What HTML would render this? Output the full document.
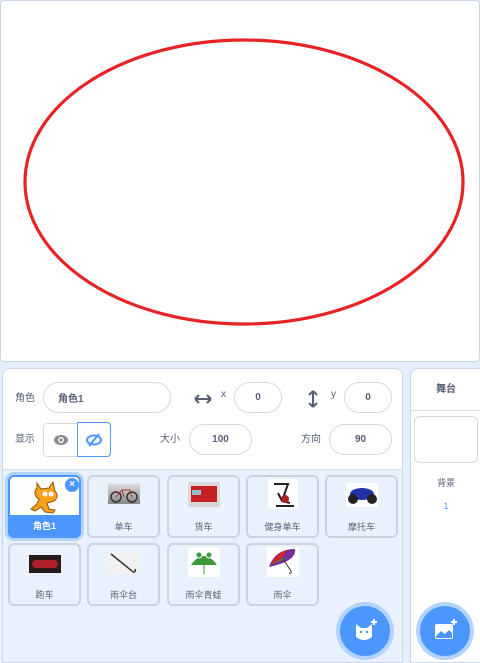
<!DOCTYPE html>
<html><head><meta charset="utf-8"><style>
*{box-sizing:border-box;margin:0;padding:0}
body{width:480px;height:657px;overflow:hidden;background:#e5f0ff;font-family:"Liberation Sans","Noto Sans CJK SC",sans-serif;color:#575e75;position:relative}
.stage{position:absolute;left:0;top:0;width:480px;height:362px;background:#fff;border:1px solid #c9d6e8;border-radius:4px}
.panel{position:absolute;left:2px;top:368px;width:401px;height:295px;background:#e9f1fc;border:1px solid #c9d6e8;border-radius:8px 8px 0 0;overflow:hidden}
.info{position:absolute;left:0;top:0;width:100%;height:101px;background:#fff;border-bottom:1px solid #d9e0ea}
.lbl{position:absolute;font-size:10px;color:#575e75}
.inp{position:absolute;height:31px;border:1px solid #d9d9d9;border-radius:16px;font-size:10px;font-weight:bold;color:#575e75;display:flex;align-items:center;justify-content:center}
.stagep{position:absolute;left:410px;top:368px;width:72px;height:295px;background:#fff;border:1px solid #c9d6e8;border-radius:8px 0 0 0}
.tile{position:absolute;width:73px;height:63px;background:#e9f1fc;border:2px solid #cdd3dc;border-radius:6px}
.tile .nm{position:absolute;left:0;right:0;top:43px;text-align:center;font-size:9px;color:#575e75}
.th{position:absolute;left:50%;transform:translateX(-50%)}
.btn{position:absolute;width:50px;height:50px;border-radius:50%;background:#4c97ff;box-shadow:0 0 0 4px #b3d4ff;display:flex;align-items:center;justify-content:center}
</style></head><body>
<div class="stage"><svg width="480" height="362" style="position:absolute;left:-1px;top:-1px"><ellipse cx="244" cy="182" rx="219" ry="142" fill="none" stroke="#e62325" stroke-width="3.2"/></svg></div>

<div class="panel">
 <div class="info">
  <div class="lbl" style="left:12px;top:20px">角色</div>
  <div class="inp" style="left:40px;top:13px;width:128px;justify-content:flex-start;padding-left:14px">角色1</div>
  <svg style="position:absolute;left:191px;top:25px" width="18" height="10" viewBox="0 0 18 10"><path d="M1 5H17M1 5L5 1M1 5L5 9M17 5L13 1M17 5L13 9" stroke="#575e75" stroke-width="2" fill="none"/></svg>
  <div class="lbl" style="left:218px;top:20px">x</div>
  <div class="inp" style="left:231px;top:13px;width:48px">0</div>
  <svg style="position:absolute;left:305px;top:21px" width="10" height="18" viewBox="0 0 10 18"><path d="M5 1V17M5 1L1 5M5 1L9 5M5 17L1 13M5 17L9 13" stroke="#575e75" stroke-width="2" fill="none"/></svg>
  <div class="lbl" style="left:328px;top:20px">y</div>
  <div class="inp" style="left:341px;top:13px;width:48px">0</div>
  <div class="lbl" style="left:12px;top:61px">显示</div>
  <div style="position:absolute;left:40px;top:54px;width:35px;height:34px;border:1px solid #d9d9d9;border-radius:4px 0 0 4px"></div>
  <svg style="position:absolute;left:50px;top:65px" width="16" height="12"><ellipse cx="8" cy="6" rx="7" ry="5" fill="#878a91"/><circle cx="8" cy="6" r="3" fill="#fff"/><circle cx="8" cy="6" r="1.6" fill="#878a91"/></svg>
  <div style="position:absolute;left:74px;top:53px;width:34px;height:35px;border:1px solid #4c97ff;border-radius:0 4px 4px 0"></div>
  <svg style="position:absolute;left:83px;top:63px" width="16" height="15"><ellipse cx="8" cy="8" rx="7" ry="4.5" fill="none" stroke="#4c97ff" stroke-width="2"/><path d="M3 14L13 2" stroke="#4c97ff" stroke-width="2"/></svg>
  <div class="lbl" style="left:157px;top:61px">大小</div>
  <div class="inp" style="left:186px;top:55px;width:63px">100</div>
  <div class="lbl" style="left:298px;top:61px">方向</div>
  <div class="inp" style="left:326px;top:55px;width:63px">90</div>
 </div>
 <!-- row 1 -->
 <div class="tile" style="left:5px;top:106px;background:#fff;border:2px solid #4c97ff;box-shadow:0 0 0 3px #b3d4ff">
  <svg class="th" style="top:2px" width="40" height="36" viewBox="0 0 40 36"><path d="M12 4L16 10 24 9 28 3 30 12C34 16 32 22 26 23L22 24 24 30 30 31 28 34 20 33 16 28 10 32 6 30 12 25 14 20C9 18 9 12 12 9Z" fill="#f9a11b" stroke="#8a5a10" stroke-width="1"/><circle cx="20" cy="15" r="2.5" fill="#fff"/><circle cx="26" cy="15" r="2.5" fill="#fff"/></svg>
  <div style="position:absolute;left:55px;top:1px;width:14px;height:14px;border-radius:50%;background:#4c97ff;color:#fff;font-size:10px;font-weight:bold;text-align:center;line-height:14px">×</div>
  <div style="position:absolute;left:-2px;right:-2px;bottom:-2px;height:23px;background:#4c97ff;border-radius:0 0 6px 6px;color:#fff;font-size:9px;font-weight:bold;text-align:center;line-height:22px">角色1</div>
 </div>
 <div class="tile" style="left:84px;top:106px"><div class="th" style="top:7px;width:32px;height:20px;background:linear-gradient(#ddd,#888)"><svg width="32" height="20"><circle cx="8" cy="13" r="5" fill="none" stroke="#333" stroke-width="1.5"/><circle cx="24" cy="13" r="5" fill="none" stroke="#333" stroke-width="1.5"/><path d="M8 13L14 6 22 6 24 13M14 6L16 13" stroke="#a33" fill="none"/></svg></div><div class="nm">单车</div></div>
 <div class="tile" style="left:164px;top:106px"><div class="th" style="top:5px;width:32px;height:25px;background:#d8d8d8"><div style="position:absolute;left:3px;top:4px;width:26px;height:16px;background:#c62020"></div><div style="position:absolute;left:4px;top:8px;width:9px;height:5px;background:#9bc"></div></div><div class="nm">货车</div></div>
 <div class="tile" style="left:243px;top:106px"><div class="th" style="top:2px;width:30px;height:30px;background:#fff"><svg width="30" height="30"><path d="M6 5H20L14 22M8 27H26M10 14L14 22 22 24" stroke="#222" stroke-width="2" fill="none"/><circle cx="17" cy="20" r="4" fill="#a22"/></svg></div><div class="nm">健身单车</div></div>
 <div class="tile" style="left:322px;top:106px"><div class="th" style="top:6px;width:32px;height:24px;background:#fff"><svg width="32" height="24"><ellipse cx="16" cy="11" rx="12" ry="6" fill="#2233aa"/><circle cx="7" cy="16" r="5" fill="#222"/><circle cx="26" cy="16" r="5" fill="#222"/></svg></div><div class="nm">摩托车</div></div>
 <!-- row 2 -->
 <div class="tile" style="left:5px;top:174px"><div class="th" style="top:10px;width:32px;height:18px;background:#2a1a1a"><div style="position:absolute;left:3px;top:5px;width:26px;height:8px;border-radius:4px;background:#b0202a"></div></div><div class="nm">跑车</div></div>
 <div class="tile" style="left:84px;top:174px"><div class="th" style="top:7px;width:32px;height:22px;background:#f1f1f1"><svg width="32" height="22"><path d="M3 2L24 19C26 21 28 20 27 17" stroke="#333" stroke-width="1.5" fill="none"/></svg></div><div class="nm">雨伞台</div></div>
 <div class="tile" style="left:164px;top:174px"><div class="th" style="top:2px;width:32px;height:30px;background:#fff"><svg width="32" height="30"><path d="M3 18Q16 0 29 18Z" fill="#3a9a3a"/><circle cx="11" cy="8" r="3" fill="#3a9a3a" stroke="#fff"/><circle cx="21" cy="8" r="3" fill="#3a9a3a" stroke="#fff"/><path d="M16 18V27" stroke="#3a9a3a"/></svg></div><div class="nm">雨伞青蛙</div></div>
 <div class="tile" style="left:243px;top:174px"><div class="th" style="top:2px;width:32px;height:30px;background:#fff"><svg width="32" height="30"><path d="M2 20Q8 2 28 2Q30 14 2 20Z" fill="#7a2a9a"/><path d="M4 18Q10 6 20 3L14 12Z" fill="#e02020"/><path d="M4 18L14 12 22 10Z" fill="#20a040"/><path d="M16 12L24 24Q25 27 22 26" stroke="#333" fill="none"/></svg></div><div class="nm">雨伞</div></div>
</div>

<div class="stagep">
 <div style="position:absolute;left:0;right:0;top:0;height:42px;border-bottom:1px solid #d9e0ea;text-align:center;line-height:42px;font-size:10px;font-weight:bold">舞台</div>
 <div style="position:absolute;left:3px;top:47px;width:64px;height:47px;border:1px solid #d9d9d9;border-radius:6px"></div>
 <div style="position:absolute;left:0;right:0;top:107px;text-align:center;font-size:9px">背景</div>
 <div style="position:absolute;left:0;right:0;top:132px;text-align:center;font-size:9px;color:#4c97ff">1</div>
</div>

<div class="btn" style="left:340px;top:606px"><svg width="26" height="26" viewBox="0 0 26 26"><path d="M4 6L9 10H15L20 6V19Q12 25 4 19Z" fill="#fff"/><circle cx="9" cy="14" r="1.2" fill="#4c97ff"/><circle cx="15" cy="14" r="1.2" fill="#4c97ff"/><path d="M22 1V7M19 4H25" stroke="#fff" stroke-width="2"/></svg></div>
<div class="btn" style="left:420px;top:606px"><svg width="26" height="26" viewBox="0 0 26 26"><rect x="3" y="6" width="18" height="15" rx="2" fill="#fff"/><path d="M4 18L9 13 13 16 17 12 20 15V20H4Z" fill="#4c97ff"/><path d="M22 1V7M19 4H25" stroke="#fff" stroke-width="2"/></svg></div>
</body></html>
